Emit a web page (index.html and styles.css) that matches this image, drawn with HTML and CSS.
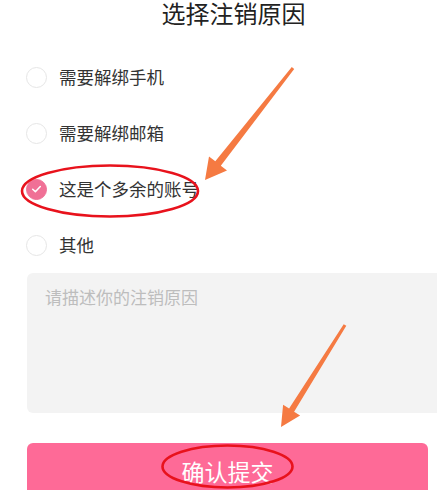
FILE: index.html
```html
<!DOCTYPE html>
<html lang="zh-CN">
<head>
<meta charset="utf-8">
<title>选择注销原因</title>
<link rel="stylesheet" href="styles.css">
</head>
<body>
<div class="page">
  <h1 class="title">选择注销原因</h1>
  <ul class="options">
    <li class="option"><span class="radio"></span><span class="label">需要解绑手机</span></li>
    <li class="option"><span class="radio"></span><span class="label">需要解绑邮箱</span></li>
    <li class="option"><span class="radio checked"><svg viewBox="0 0 20 20" width="20" height="20"><path d="M6 10.2 L8.8 12.8 L14 7.4" fill="none" stroke="#fff" stroke-width="1.6" stroke-linecap="round" stroke-linejoin="round"/></svg></span><span class="label">这是个多余的账号</span></li>
    <li class="option"><span class="radio"></span><span class="label">其他</span></li>
  </ul>
  <div class="reason"><span class="placeholder">请描述你的注销原因</span></div>
  <button class="submit">确认提交</button>
  <svg class="marks" viewBox="0 0 437 490" width="437" height="490">
    <polygon fill="#f57a42" points="294.2,68.9 220.8,165.7 227,170.6 205,180 209,156.4 215.3,161.3 291.8,67.1"/>
    <polygon fill="#f57a42" points="346.3,325.8 294.1,411.7 300.1,415.4 281,427 283.1,404.8 289.1,408.5 343.7,324.2"/>
    <ellipse cx="110" cy="191" rx="88" ry="25.5" fill="none" stroke="#e8121c" stroke-width="2.6"/>
    <ellipse cx="227.5" cy="466.5" rx="65" ry="21" fill="none" stroke="#e8121c" stroke-width="2.6"/>
  </svg>
</div>
</body>
</html>
```
FILE: styles.css
```css
html, body {
  margin: 0;
  padding: 0;
  background: #fff;
}
.page {
  position: relative;
  width: 437px;
  height: 490px;
  overflow: hidden;
  font-family: "Noto Sans CJK SC", "Noto Sans", sans-serif;
}
.title {
  margin: 0;
  padding-left: 30px;
  height: 49px;
  font-size: 24px;
  font-weight: 400;
  line-height: 26px;
  color: #222;
  text-align: center;
}
.options {
  list-style: none;
  margin: 0;
  padding: 0 0 0 26px;
}
.option {
  height: 56px;
  display: flex;
  align-items: center;
  gap: 12px;
}
.radio {
  width: 21px;
  height: 21px;
  box-sizing: border-box;
  border: 1px solid #e6e6e6;
  border-radius: 50%;
  display: flex;
  align-items: center;
  justify-content: center;
  flex: none;
}
.radio.checked {
  background: #f07096;
  border-color: #f07096;
}
.label {
  font-size: 17.5px;
  color: #333;
  line-height: 20px;
}
.reason {
  margin-left: 27px;
  width: 430px;
  height: 140px;
  background: #f3f3f3;
  border-radius: 6px;
  box-sizing: border-box;
  padding: 12px 0 0 18px;
}
.placeholder {
  font-size: 17px;
  color: #bdbdbd;
  line-height: 24px;
}
.submit {
  display: block;
  margin: 30px 0 0 27px;
  width: 401px;
  height: 56px;
  border: none;
  border-radius: 6px;
  background: #fe6a97;
  color: #fff;
  font-family: inherit;
  font-size: 23px;
  padding: 0;
  line-height: 56px;
}
.marks {
  position: absolute;
  left: 0;
  top: 0;
  pointer-events: none;
}
```
